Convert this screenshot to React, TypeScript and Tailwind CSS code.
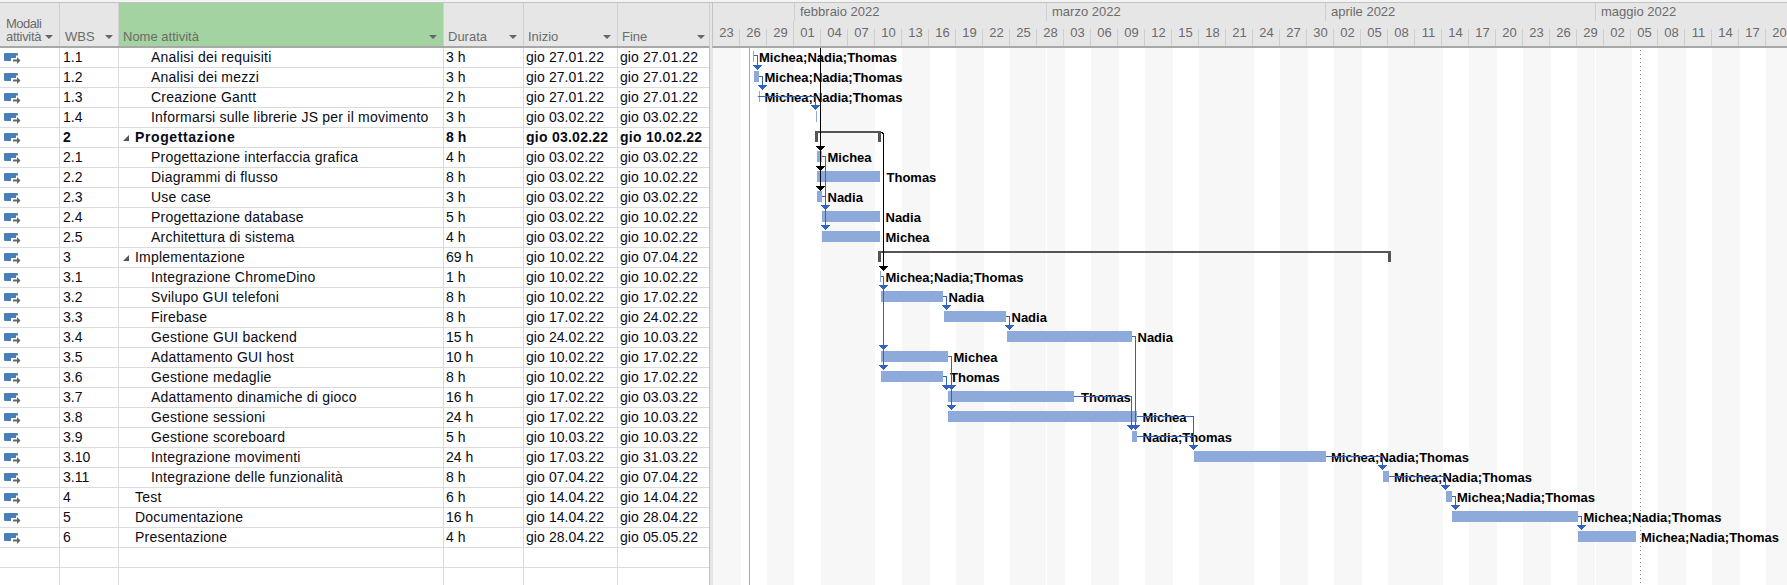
import React from "react";

type Row = { wbs: string; name: string; dur: string; start: string; end: string; level: 0 | 1 | 2; bold?: boolean; group?: boolean };

const rows: Row[] = [
  { wbs: "1.1", name: "Analisi dei requisiti", dur: "3 h", start: "gio 27.01.22", end: "gio 27.01.22", level: 2 },
  { wbs: "1.2", name: "Analisi dei mezzi", dur: "3 h", start: "gio 27.01.22", end: "gio 27.01.22", level: 2 },
  { wbs: "1.3", name: "Creazione Gantt", dur: "2 h", start: "gio 27.01.22", end: "gio 27.01.22", level: 2 },
  { wbs: "1.4", name: "Informarsi sulle librerie JS per il movimento", dur: "3 h", start: "gio 03.02.22", end: "gio 03.02.22", level: 2 },
  { wbs: "2", name: "Progettazione", dur: "8 h", start: "gio 03.02.22", end: "gio 10.02.22", level: 1, bold: true, group: true },
  { wbs: "2.1", name: "Progettazione interfaccia grafica", dur: "4 h", start: "gio 03.02.22", end: "gio 03.02.22", level: 2 },
  { wbs: "2.2", name: "Diagrammi di flusso", dur: "8 h", start: "gio 03.02.22", end: "gio 10.02.22", level: 2 },
  { wbs: "2.3", name: "Use case", dur: "3 h", start: "gio 03.02.22", end: "gio 03.02.22", level: 2 },
  { wbs: "2.4", name: "Progettazione database", dur: "5 h", start: "gio 03.02.22", end: "gio 10.02.22", level: 2 },
  { wbs: "2.5", name: "Architettura di sistema", dur: "4 h", start: "gio 03.02.22", end: "gio 10.02.22", level: 2 },
  { wbs: "3", name: "Implementazione", dur: "69 h", start: "gio 10.02.22", end: "gio 07.04.22", level: 1, group: true },
  { wbs: "3.1", name: "Integrazione ChromeDino", dur: "1 h", start: "gio 10.02.22", end: "gio 10.02.22", level: 2 },
  { wbs: "3.2", name: "Svilupo GUI telefoni", dur: "8 h", start: "gio 10.02.22", end: "gio 17.02.22", level: 2 },
  { wbs: "3.3", name: "Firebase", dur: "8 h", start: "gio 17.02.22", end: "gio 24.02.22", level: 2 },
  { wbs: "3.4", name: "Gestione GUI backend", dur: "15 h", start: "gio 24.02.22", end: "gio 10.03.22", level: 2 },
  { wbs: "3.5", name: "Adattamento GUI host", dur: "10 h", start: "gio 10.02.22", end: "gio 17.02.22", level: 2 },
  { wbs: "3.6", name: "Gestione medaglie", dur: "8 h", start: "gio 10.02.22", end: "gio 17.02.22", level: 2 },
  { wbs: "3.7", name: "Adattamento dinamiche di gioco", dur: "16 h", start: "gio 17.02.22", end: "gio 03.03.22", level: 2 },
  { wbs: "3.8", name: "Gestione sessioni", dur: "24 h", start: "gio 17.02.22", end: "gio 10.03.22", level: 2 },
  { wbs: "3.9", name: "Gestione scoreboard", dur: "5 h", start: "gio 10.03.22", end: "gio 10.03.22", level: 2 },
  { wbs: "3.10", name: "Integrazione movimenti", dur: "24 h", start: "gio 17.03.22", end: "gio 31.03.22", level: 2 },
  { wbs: "3.11", name: "Integrazione delle funzionalità", dur: "8 h", start: "gio 07.04.22", end: "gio 07.04.22", level: 2 },
  { wbs: "4", name: "Test", dur: "6 h", start: "gio 14.04.22", end: "gio 14.04.22", level: 1 },
  { wbs: "5", name: "Documentazione", dur: "16 h", start: "gio 14.04.22", end: "gio 28.04.22", level: 1 },
  { wbs: "6", name: "Presentazione", dur: "4 h", start: "gio 28.04.22", end: "gio 05.05.22", level: 1 },
];

const ALL = "Michea;Nadia;Thomas";
// chart coordinates are page x; CX subtracts the left edge of the chart
const CX = 713;
const bars: { r: number; a: number; b: number; label?: string; lx?: number }[] = [
  { r: 0, a: 753, b: 754, label: ALL, lx: 759 },
  { r: 1, a: 754, b: 759, label: ALL, lx: 764.5 },
  { r: 2, a: 759, b: 760, label: ALL, lx: 764.5 },
  { r: 3, a: 816, b: 817 },
  { r: 5, a: 817, b: 822, label: "Michea", lx: 827.5 },
  { r: 6, a: 817, b: 880, label: "Thomas", lx: 886.5 },
  { r: 7, a: 817, b: 822, label: "Nadia", lx: 827.5 },
  { r: 8, a: 822, b: 880, label: "Nadia", lx: 885.5 },
  { r: 9, a: 822, b: 880, label: "Michea", lx: 885.5 },
  { r: 11, a: 880, b: 881, label: ALL, lx: 885.5 },
  { r: 12, a: 881, b: 943, label: "Nadia", lx: 948.5 },
  { r: 13, a: 944, b: 1006, label: "Nadia", lx: 1011.5 },
  { r: 14, a: 1007, b: 1132, label: "Nadia", lx: 1137.5 },
  { r: 15, a: 881, b: 948, label: "Michea", lx: 953.5 },
  { r: 16, a: 881, b: 943, label: "Thomas", lx: 950 },
  { r: 17, a: 948, b: 1074, label: "Thomas", lx: 1081 },
  { r: 18, a: 948, b: 1137, label: "Michea", lx: 1142.5 },
  { r: 19, a: 1132, b: 1137, label: "Nadia;Thomas", lx: 1142.5 },
  { r: 20, a: 1194, b: 1326, label: ALL, lx: 1331 },
  { r: 21, a: 1383, b: 1389, label: ALL, lx: 1394 },
  { r: 22, a: 1446, b: 1452, label: ALL, lx: 1457 },
  { r: 23, a: 1452, b: 1578, label: ALL, lx: 1583.5 },
  { r: 24, a: 1578, b: 1636, label: ALL, lx: 1641 },
];

// [from x, row y, to x, arrow tips...]
const links: { x0: number; y: number; x1: number; tips: number[] }[] = [
  { x0: 754, y: 55, x1: 757, tips: [70] },
  { x0: 759, y: 76, x1: 762, tips: [90] },
  { x0: 758, y: 96, x1: 815, tips: [110] },
  { x0: 822, y: 156, x1: 825, tips: [210, 230] },
  { x0: 822, y: 196, x1: 825, tips: [] },
  { x0: 881, y: 276, x1: 883, tips: [290, 350, 370] },
  { x0: 943, y: 296, x1: 946, tips: [310] },
  { x0: 1006, y: 316, x1: 1009, tips: [330] },
  { x0: 1132, y: 336, x1: 1135, tips: [430] },
  { x0: 948, y: 356, x1: 951, tips: [390, 410] },
  { x0: 943, y: 376, x1: 946, tips: [390] },
  { x0: 1074, y: 396, x1: 1131, tips: [430] },
  { x0: 1137, y: 416, x1: 1193, tips: [450] },
  { x0: 1137, y: 436, x1: 1190, tips: [] },
  { x0: 1326, y: 456, x1: 1382, tips: [470] },
  { x0: 1389, y: 476, x1: 1445, tips: [490] },
  { x0: 1452, y: 496, x1: 1455, tips: [510] },
  { x0: 1578, y: 516, x1: 1581, tips: [530] },
];

const stripes: [number, boolean][] = [
  [28, true], [26, false], [27, true], [27, false], [54, true], [27, false], [28, true], [26, false], [28, true], [26, false],
  [55, true], [26, false], [28, true], [26, false], [28, true], [26, false], [55, true], [26, false], [28, true], [26, false],
  [28, true], [26, false], [55, true], [26, false], [28, true], [26, false], [28, true], [26, false], [55, true], [26, false],
  [28, true], [26, false], [28, true], [26, false], [21, true],
];

const ticks = ["23","26","29","01","04","07","10","13","16","19","22","25","28","03","06","09","12","15","18","21","24","27","30","02","05","08","11","14","17","20","23","26","29","02","05","08","11","14","17","20"];
const months: [string, number][] = [["", 81], ["febbraio 2022", 252], ["marzo 2022", 279], ["aprile 2022", 270], ["maggio 2022", 192]];

const Caret = () => <span className="block w-0 h-0 border-x-[4px] border-x-transparent border-t-[4px] border-t-[#666]" />;

const HeadCell = ({ w, pl, children, green, caretRight }: { w: string; pl: string; children: React.ReactNode; green?: boolean; caretRight: string }) => (
  <div className={`relative shrink-0 h-full border-r border-[#d0d0d0] ${w} ${green ? "bg-[#a3d3a0]" : ""}`}>
    <div className={`absolute bottom-[3px] left-0 leading-[13px] text-[13px] text-[#6b6b6b] ${pl}`}>{children}</div>
    <span className={`absolute bottom-[7px] ${caretRight}`}><Caret /></span>
  </div>
);

const ModeIcon = () => (
  <svg width="24" height="19" viewBox="0 0 24 19" className="shrink-0 self-start">
    <rect x="4" y="5" width="14" height="8" rx="1" fill="#4a7ebb" />
    <path d="M11 10h5V7.5h2l3.5 5-3.5 5h-2V15h-5z" fill="#fff" />
    <path d="M13 11.5h4V9l3.5 3.5L17 16v-2.5h-4z" fill="#666" />
  </svg>
);

export default function App() {
  return (
    <div className="h-[585px] w-[1787px] overflow-hidden bg-[#f3f3f3] font-['Liberation_Sans',Arial,sans-serif] text-[14px] text-[#0a0a14] flex flex-col pt-[2px]">
      <div className="h-px bg-[#c4c4c4] shrink-0" />
      <div className="flex flex-1 min-h-0">
        {/* task table */}
        <div className="w-[710px] shrink-0 flex flex-col bg-white border-r border-[#c0c0c0]">
          <div className="flex h-[45px] shrink-0 bg-[#e6e6e6] border-b-2 border-[#a8a8a8]">
            <HeadCell w="w-[60px]" pl="pl-[6px] w-[43px] overflow-hidden whitespace-nowrap" caretRight="right-[6px]"><div className="tracking-[-0.5px]">Modali</div><div className="tracking-[-0.3px]">attività</div></HeadCell>
            <HeadCell w="w-[59px]" pl="pl-[5px]" caretRight="right-[5px]">WBS</HeadCell>
            <HeadCell w="w-[325px]" pl="pl-[4px]" green caretRight="right-[6px]">Nome attività</HeadCell>
            <HeadCell w="w-[80px]" pl="pl-[4px]" caretRight="right-[6px]">Durata</HeadCell>
            <HeadCell w="w-[94px]" pl="pl-[4px]" caretRight="right-[6px]">Inizio</HeadCell>
            <HeadCell w="w-[92px]" pl="pl-[4px]" caretRight="right-[4px]">Fine</HeadCell>
          </div>
          <div className="flex-1 min-h-0 overflow-hidden">
            {[...rows, null, null].map((row, i) => (
              <div key={i} className={`flex h-[20px] border-b border-[#dcdcdc] leading-[19px] whitespace-nowrap ${row?.bold ? "font-bold" : ""}`}>
                <div className="w-[60px] shrink-0 border-r border-[#dcdcdc] flex items-center">{row && <ModeIcon />}</div>
                <div className="w-[59px] shrink-0 border-r border-[#dcdcdc] pl-[3px]">{row?.wbs}</div>
                <div className={`w-[325px] shrink-0 border-r border-[#dcdcdc] flex items-center ${row?.level === 2 ? "pl-[32px]" : "pl-[4px]"}`}>
                  {row && row.level === 1 && (
                    <span className="w-[12px] shrink-0 flex items-center">
                      {row.group && <span className="block w-0 h-0 border-b-[6px] border-b-[#555] border-l-[6px] border-l-transparent" />}
                    </span>
                  )}
                  {row && <span className={row.bold ? "tracking-[0.6px]" : "tracking-[0.22px]"}>{row.name}</span>}
                </div>
                <div className="w-[80px] shrink-0 border-r border-[#dcdcdc] pl-[2px]">{row?.dur}</div>
                <div className={`w-[94px] shrink-0 border-r border-[#dcdcdc] pl-[2px] ${row?.bold ? "tracking-[0.25px]" : "tracking-[0.08px]"}`}>{row?.start}</div>
                <div className={`w-[91px] shrink-0 pl-[2px] ${row?.bold ? "tracking-[0.25px]" : "tracking-[0.08px]"}`}>{row?.end}</div>
              </div>
            ))}
            <div className="flex h-full">
              <div className="w-[60px] border-r border-[#dcdcdc]" />
              <div className="w-[59px] border-r border-[#dcdcdc]" />
              <div className="w-[325px] border-r border-[#dcdcdc]" />
              <div className="w-[80px] border-r border-[#dcdcdc]" />
              <div className="w-[94px] border-r border-[#dcdcdc]" />
            </div>
          </div>
        </div>
        {/* splitter */}
        <div className="w-[3px] shrink-0 bg-[#e6e6e6]" />
        {/* gantt */}
        <div className="flex-1 min-w-0 flex flex-col">
          <div className="h-[45px] shrink-0 bg-[#e6e6e6] border-b-2 border-[#a8a8a8] border-l border-l-[#c4c4c4] -ml-px text-[13px] text-[#6b6b6b] overflow-hidden">
            <div className="flex h-[18px]">
              {months.map(([m, w], i) => (
                <div key={i} className={`shrink-0 pl-[5px] leading-[18px] border-l ${i === 0 ? "border-transparent" : "border-[#cfcfcf]"}`} style={{ width: w }}>{m}</div>
              ))}
            </div>
            <div className="flex h-[25px]">
              {ticks.map((t, i) => (
                <div key={i} className="relative shrink-0 w-[27px] text-center leading-[23px]">
                  {t}
                  <span className={`absolute right-0 bottom-0 w-px bg-[#cfcfcf] ${i === 2 ? "h-[25px]" : "h-[17px]"}`} />
                </div>
              ))}
            </div>
          </div>
          <div className="relative flex-1 min-h-0 overflow-hidden bg-white">
            <div className="flex h-full">
              {stripes.map(([w, on], i) => (
                <div key={i} className={`shrink-0 ${on ? "bg-[#f7f7f7]" : ""}`} style={{ width: w }} />
              ))}
            </div>
            <div className="absolute top-0 bottom-0 left-[36px] w-px bg-[#92bb92]" />
            <div className="absolute top-0 bottom-0 left-[333px] w-px bg-white" />
            <div className="absolute top-0 bottom-0 left-[882px] w-px bg-white" />
            {bars.map((b) => (
              <React.Fragment key={b.r}>
                <div className="absolute h-[11px] bg-[#8eaadb]" style={{ left: b.a - CX, width: b.b - b.a, top: 3 + b.r * 20 }} />
                {b.label && (
                  <div className="absolute h-[20px] leading-[20px] whitespace-nowrap font-bold text-[13px] text-black" style={{ left: (b.lx as number) - CX, top: b.r * 20 }}>{b.label}</div>
                )}
              </React.Fragment>
            ))}
            <svg className="absolute inset-0" width="1074" height="537" viewBox="713 48 1074 537" fill="none" shapeRendering="crispEdges">
              <path d="M1640.5 50V585" stroke="#808080" strokeDasharray="1 3" />
              {/* summary brackets */}
              <path d="M815 131H881V142H878V133H818V142H815Z" fill="#555" />
              <path d="M878 251H1391V262H1388V253H881V262H878Z" fill="#555" />
              {/* critical path */}
              <path d="M820.5 48V187" stroke="#000" strokeWidth="1.5" />
              <path d="M881 132.5H882Q883.5 133 883.5 135V267" stroke="#000" />
              {[151, 171, 191].map((t) => <path key={t} d={`M816 ${t - 5}H825L820.5 ${t}Z`} fill="#000" />)}
              <path d="M879 266H888L883.5 271Z" fill="#000" />
              {/* links */}
              {links.map((l, i) => {
                const last = l.tips.length ? l.tips[l.tips.length - 1] - 4 : l.y + 2;
                return (
                  <g key={i}>
                    <path d={`M${l.x0} ${l.y + 0.5}H${l.x1 - 1}Q${l.x1 + 0.5} ${l.y + 0.5} ${l.x1 + 0.5} ${l.y + 2}V${last}`} stroke="#3063c4" />
                    {l.tips.map((t) => <path key={t} d={`M${l.x1 - 4} ${t - 5}H${l.x1 + 5}L${l.x1 + 0.5} ${t}Z`} fill="#3063c4" />)}
                  </g>
                );
              })}
              <path d="M1190 436.5H1193" stroke="#3063c4" />
            </svg>
          </div>
        </div>
      </div>
    </div>
  );
}
